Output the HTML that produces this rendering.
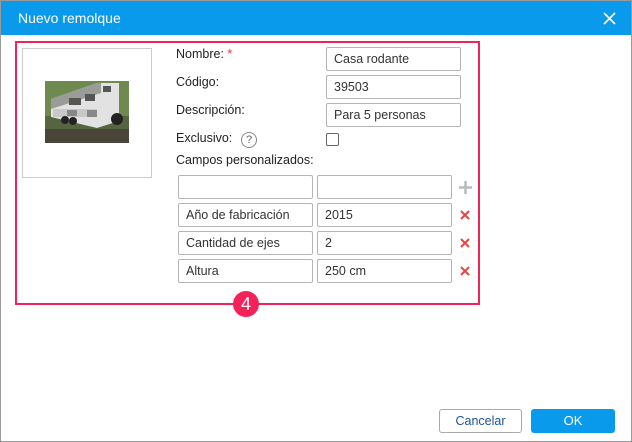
<!DOCTYPE html>
<html><head><style>
*{box-sizing:border-box;margin:0;padding:0}
body{width:632px;height:442px;background:#fff;font-family:"Liberation Sans",Arial,sans-serif;position:relative;overflow:hidden;color:#222}
.a{position:absolute}
.hdr{left:0;top:0;width:632px;height:35px;background:#0a9aec;border:1px solid #9a9a9a;border-bottom:none}
.hdr span{position:absolute;left:17px;top:9px;color:#fff;font-size:14px}
.frame{left:0;top:0;width:632px;height:442px;border:1px solid #9a9a9a;border-top:none}
.inp{position:absolute;height:24px;border:1px solid #b5b5b5;border-radius:2px;font-size:12.5px;padding:4px 0 0 7px;color:#333;background:#fff}
.lbl{position:absolute;font-size:12.5px;color:#222}
</style></head><body>
<div class="a frame"></div>
<div class="a hdr"><span>Nuevo remolque</span>
<svg class="a" style="left:602px;top:11px" width="13" height="13"><path d="M1 1L12 12M12 1L1 12" stroke="#fff" stroke-width="1.6"/></svg></div>
<div class="a" style="left:15px;top:41px;width:465px;height:264px;border:2px solid #f5225a"></div>
<div class="a" style="left:22px;top:48px;width:130px;height:130px;border:1px solid #ccc"></div>
<svg class="a" style="left:45px;top:81px" width="84" height="62">
<rect width="84" height="62" fill="#55653f"/>
<rect y="0" width="84" height="35" fill="#6f8a4e"/>
<rect y="48" width="84" height="14" fill="#4a4538"/>
<polygon points="6,18 52,2 74,2 74,40 52,47 6,36" fill="#e2e2e2"/>
<polygon points="6,18 52,2 56,2 56,12 6,28" fill="#9a9c98"/>
<rect x="8" y="28" width="44" height="8" fill="#c8c8c8"/>
<rect x="24" y="17" width="12" height="7" fill="#555"/><rect x="40" y="13" width="10" height="7" fill="#555"/><rect x="58" y="5" width="8" height="6" fill="#555"/>
<rect x="22" y="29" width="10" height="6" fill="#888"/><rect x="42" y="29" width="10" height="7" fill="#888"/>
<circle cx="72" cy="38" r="6" fill="#222"/><circle cx="20" cy="39" r="4" fill="#222"/><circle cx="28" cy="40" r="4" fill="#222"/>
</svg>
<div class="lbl" style="left:176px;top:47px">Nombre: <span style="color:#e33">*</span></div>
<div class="lbl" style="left:176px;top:75px">Código:</div>
<div class="lbl" style="left:176px;top:103px">Descripción:</div>
<div class="lbl" style="left:176px;top:131px">Exclusivo:</div>
<div class="a" style="left:241px;top:132px;width:16px;height:16px;border:1px solid #888;border-radius:50%;font-size:11px;text-align:center;line-height:14px;color:#666">?</div>
<div class="lbl" style="left:176px;top:153px">Campos personalizados:</div>
<div class="inp" style="left:326px;top:47px;width:135px">Casa rodante</div>
<div class="inp" style="left:326px;top:75px;width:135px">39503</div>
<div class="inp" style="left:326px;top:103px;width:135px">Para 5 personas</div>
<div class="a" style="left:326px;top:133px;width:13px;height:13px;border:1px solid #666;border-radius:2px"></div>
<div class="inp" style="left:178px;top:175px;width:135px"></div>
<div class="inp" style="left:317px;top:175px;width:135px"></div>
<svg class="a" style="left:459px;top:181px" width="13" height="13"><path d="M6.5 0V13M0 6.5H13" stroke="#bbb" stroke-width="2.5"/></svg>
<div class="inp" style="left:178px;top:203px;width:135px">Año de fabricación</div>
<div class="inp" style="left:317px;top:203px;width:135px">2015</div>
<div class="inp" style="left:178px;top:231px;width:135px">Cantidad de ejes</div>
<div class="inp" style="left:317px;top:231px;width:135px">2</div>
<div class="inp" style="left:178px;top:259px;width:135px">Altura</div>
<div class="inp" style="left:317px;top:259px;width:135px">250 cm</div>
<svg class="a" style="left:460px;top:210px" width="10" height="10"><path d="M1 1L9 9M9 1L1 9" stroke="#e84545" stroke-width="2"/></svg>
<svg class="a" style="left:460px;top:238px" width="10" height="10"><path d="M1 1L9 9M9 1L1 9" stroke="#e84545" stroke-width="2"/></svg>
<svg class="a" style="left:460px;top:266px" width="10" height="10"><path d="M1 1L9 9M9 1L1 9" stroke="#e84545" stroke-width="2"/></svg>
<div class="a" style="left:233px;top:291px;width:26px;height:26px;border-radius:50%;background:#f5225a;color:#fff;font-size:18px;text-align:center;line-height:26px">4</div>
<div class="a" style="left:439px;top:409px;width:83px;height:24px;border:1px solid #aaa;border-radius:3px;text-align:center;font-size:12.5px;line-height:22px;color:#1a55a0">Cancelar</div>
<div class="a" style="left:531px;top:409px;width:84px;height:24px;background:#0a9aec;border-radius:3px;text-align:center;font-size:13px;line-height:24px;color:#fff">OK</div>
</body></html>
